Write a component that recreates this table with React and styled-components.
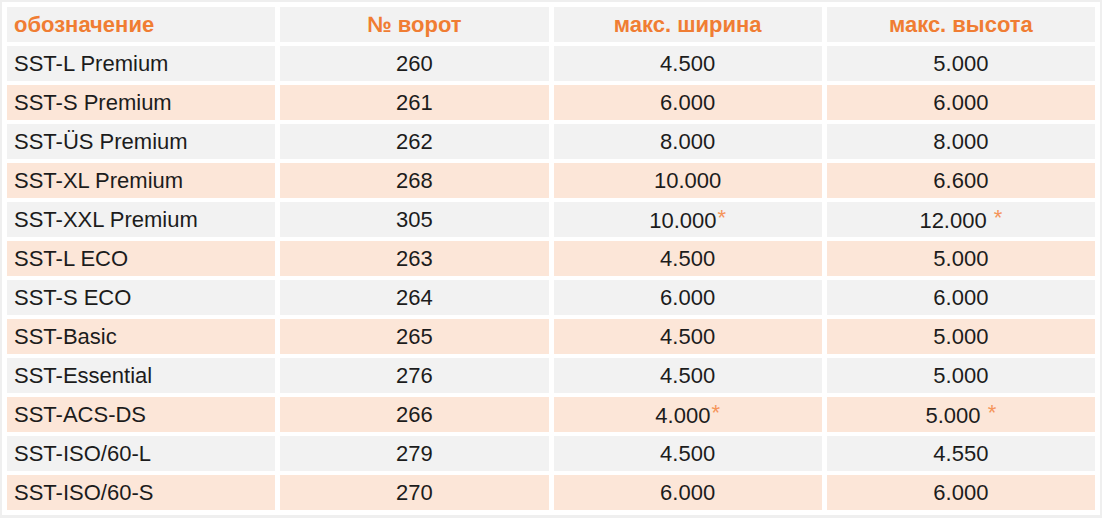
import React from "react";
import styled, { createGlobalStyle } from "styled-components";

const GlobalStyle = createGlobalStyle`
  html, body {
    margin: 0;
    padding: 0;
    background: #efefef;
  }
  body {
    font-family: "Liberation Sans", Arial, sans-serif;
  }
`;

const Wrapper = styled.div`
  margin: 2px;
  padding: 1px 0;
  background: #ffffff;
`;

const Table = styled.table`
  width: 100%;
  table-layout: fixed;
  border-collapse: separate;
  border-spacing: 5px 4px;
  font-size: 22px;
  color: #1c1c1c;
`;

const HeadCell = styled.th`
  height: 35px;
  padding: 0 7px;
  background: #f2f2f2;
  color: #f07d33;
  font-weight: bold;
  text-align: ${(p) => (p.$left ? "left" : "center")};
  vertical-align: middle;
  white-space: nowrap;
`;

const Row = styled.tr`
  background: ${(p) => (p.$alt ? "#fce6d8" : "#f2f2f2")};
`;

const Cell = styled.td`
  height: 35px;
  padding: 0 7px;
  text-align: ${(p) => (p.$left ? "left" : "center")};
  vertical-align: middle;
  white-space: nowrap;
`;

const Star = styled.span`
  color: #f5955a;
  font-size: 22px;
  vertical-align: 3px;
  margin-left: 1px;
`;

const rows = [
  ["SST-L Premium", "260", "4.500", "5.000"],
  ["SST-S Premium", "261", "6.000", "6.000"],
  ["SST-ÜS Premium", "262", "8.000", "8.000"],
  ["SST-XL Premium", "268", "10.000", "6.600"],
  ["SST-XXL Premium", "305", "10.000*", "12.000 *"],
  ["SST-L ECO", "263", "4.500", "5.000"],
  ["SST-S ECO", "264", "6.000", "6.000"],
  ["SST-Basic", "265", "4.500", "5.000"],
  ["SST-Essential", "276", "4.500", "5.000"],
  ["SST-ACS-DS", "266", "4.000*", "5.000 *"],
  ["SST-ISO/60-L", "279", "4.500", "4.550"],
  ["SST-ISO/60-S", "270", "6.000", "6.000"],
];

// value strings ending in "*" get an orange superscript star
const Value = ({ text }) => {
  if (!text.endsWith("*")) return text;
  return (
    <>
      {text.slice(0, -1)}
      <Star>*</Star>
    </>
  );
};

export default function App() {
  return (
    <>
      <GlobalStyle />
      <Wrapper>
        <Table>
          <thead>
            <tr>
              <HeadCell $left>обозначение</HeadCell>
              <HeadCell>№ ворот</HeadCell>
              <HeadCell>макс. ширина</HeadCell>
              <HeadCell>макс. высота</HeadCell>
            </tr>
          </thead>
          <tbody>
            {rows.map((r, i) => (
              <Row key={r[0]} $alt={i % 2 === 1}>
                <Cell $left>{r[0]}</Cell>
                <Cell>{r[1]}</Cell>
                <Cell>
                  <Value text={r[2]} />
                </Cell>
                <Cell>
                  <Value text={r[3]} />
                </Cell>
              </Row>
            ))}
          </tbody>
        </Table>
      </Wrapper>
    </>
  );
}
